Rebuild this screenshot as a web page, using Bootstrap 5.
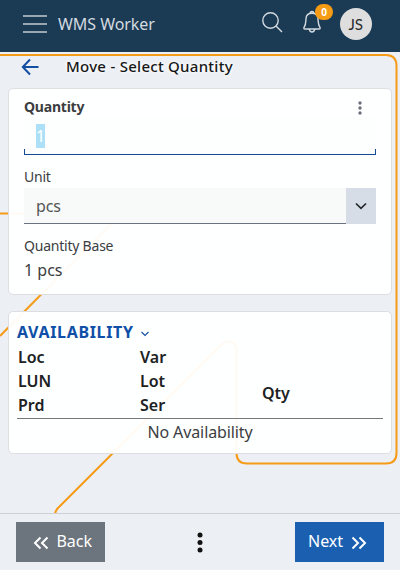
<!DOCTYPE html>
<html lang="en">
<head>
<meta charset="utf-8">
<meta name="viewport" content="width=device-width, initial-scale=1">
<title>WMS Worker</title>
<link href="https://cdn.jsdelivr.net/npm/bootstrap@5.3.0/dist/css/bootstrap.min.css" rel="stylesheet">
<style>
body{font-family:"Noto Sans","Open Sans",sans-serif;font-size:16px;line-height:24px;color:#3c3d3f;background:#eceff4;height:570px}
.topbar{height:52px;background:#1b3a54;color:#d3dae0;padding:0 28px 4px 23px}
.topbar .title{font-size:16px;margin-left:11px;letter-spacing:-.05px}
.search-icon{margin-bottom:4px}
.bell{width:20px;height:24px;margin-left:19px;margin-bottom:4px}
.count{right:-11px;top:-6px;width:18px;height:16px;background:#f59c14;color:#fff;font-size:10px;line-height:16px;font-weight:700}
.avatar{width:32px;height:32px;background:#dedede;color:#2c2c2c;font-family:Lato,sans-serif;font-size:16px;margin-left:18px}
.avatar span{transform:scaleX(.95)}
.backdrop-lines{left:0;top:0;z-index:0}
.page-main{z-index:1}
.heading{height:36px;padding:0 0 8px 21px;font-size:15px;font-weight:500;color:#171717;letter-spacing:.27px}
.heading span{margin-left:27px;line-height:22px;padding-bottom:1px;text-shadow:0 0 4px #fff,0 0 4px #fff}
.heading svg{margin-top:2px}
.panel{margin:0 8px;border:1px solid #dcdee1;border-radius:5px;background:rgba(255,255,255,.95)}
.qty-panel{height:207px;padding:7px 15px}
.avail-panel{height:143px;margin-top:16px;padding:8px}
.lbl{font-size:14px;line-height:22px}
.lbl-tight{letter-spacing:-.22px}
.lbl-gap{padding-top:11px}
.qty-field{height:37px;padding:6px 12px;border:solid #124c96;border-width:0 0 1px;background:#fdfffe}
.qty-field::before,.qty-field::after{content:"";position:absolute;bottom:0;width:1px;height:5px;background:#124c96}
.qty-field::before{left:0}.qty-field::after{right:0}
.picked{background:#ace0f6;color:#fff;display:block;width:9px;line-height:24px}
.unit-field{height:36px}
.unit-value{background:#f8faf9;border-bottom:1px solid #6b7280;padding:6px 12px;line-height:24px;color:#545557;letter-spacing:-.15px}
.unit-toggle{width:30px;background:#d6dde7}
.base-value{padding-top:1px}
.section-title{font-size:16px;font-weight:700;color:#0f4fa8;letter-spacing:.65px;line-height:24px}
.section-title svg{margin:4px 0 0 7px}
.grid-head{font-weight:600;color:#202122;line-height:24px;border-bottom:1px solid #77787a;height:75px}
.grid-head>div{width:122px;padding-left:1px}
.grid-head .qty-col{padding-top:23px}
.empty-row{letter-spacing:-.1px;padding-top:1px}
.bottombar{height:57px;border-top:1px solid #cdd0d5;background:#eceff4;padding:8px 16px;z-index:2}
.act{width:89px;height:40px;border-radius:0;font-size:16px;color:#fff}
.act-back,.act-back:hover{background:#6c757d;color:#fff;padding:0 12px 2px 16px}
.act-next,.act-next:hover{background:#1b5fb1;color:#fff;padding:0 16px 2px 12px}
.act svg{margin-top:4px}
svg{flex:none;display:block}
</style>
<script src="https://cdn.jsdelivr.net/npm/bootstrap@5.3.0/dist/js/bootstrap.bundle.min.js"></script>
</head>
<body class="position-relative d-flex flex-column overflow-hidden">
<svg class="backdrop-lines position-absolute" width="400" height="514" fill="none" stroke="#f59b18" stroke-width="2"><path d="M0 55H386Q396.500 55 396.500 66V453Q396.500 463.500 386 463.500H247Q236.500 463.500 236.500 453V350C236.500 341 227 339 221 345L58 508Q55.500 510.500 55 514M0 213.500H108C116 213.500 117 218 112 223L0 336"/></svg>
<header class="topbar d-flex align-items-center position-relative">
<svg width="24" height="20" fill="none" stroke="#98a6b2" stroke-width="2"><path d="M0 2H24M0 10H24M0 18H24"/></svg>
<span class="title">WMS Worker</span>
<svg class="ms-auto search-icon" width="21" height="21" fill="none" stroke="#d3dae0" stroke-width="1.400"><circle cx="8.500" cy="8.500" r="7.700"/><path d="M14 14L20 20"/></svg>
<div class="bell position-relative">
<svg width="20" height="24" fill="none" stroke="#d3dae0" stroke-width="1.400"><path d="M8.300 3.200V2.500Q8.300 1.500 10 1.500T11.700 2.500V3.200M2 17.500C4 15 3.700 13 4 8.500C4.200 5 6.500 3.200 10 3.200S15.800 5 16 8.500C16.300 13 16 15 18 17.500C18.500 18.500 18 19 17 19H3C2 19 1.500 18.500 2 17.500ZM7.300 19.500Q8 22 10 22T12.700 19.500"/></svg>
<span class="count position-absolute rounded-pill text-center">0</span>
</div>
<div class="avatar rounded-circle d-flex align-items-center justify-content-center"><span>JS</span></div>
</header>
<main class="page-main position-relative flex-grow-1">
<div class="heading d-flex align-items-center">
<svg width="18" height="18" fill="none" stroke="#124fa3" stroke-width="2"><path d="M9 1.500L1.800 9L9 16.500M1.500 9H17.500"/></svg>
<span>Move - Select Quantity</span>
</div>
<section class="panel qty-panel">
<div class="d-flex justify-content-between lbl lbl-tight fw-bold">
<label>Quantity</label>
<svg class="me-2" width="16" height="22" fill="#6b7078"><circle cx="8" cy="7" r="1.700"/><circle cx="8" cy="12" r="1.700"/><circle cx="8" cy="17" r="1.700"/></svg>
</div>
<div class="qty-field position-relative"><span class="picked">1</span></div>
<div class="lbl lbl-tight lbl-gap">Unit</div>
<div class="unit-field d-flex">
<div class="unit-value flex-grow-1">pcs</div>
<button class="unit-toggle border-0 p-0 d-flex align-items-center justify-content-center" aria-label="Choose unit"><svg width="12" height="8" fill="none" stroke="#26282b" stroke-width="1.700"><path d="M1 1.500L6 6.300L11 1.500"/></svg></button>
</div>
<div class="lbl lbl-tight lbl-gap">Quantity Base</div>
<div class="base-value">1 pcs</div>
</section>
<section class="panel avail-panel">
<div class="section-title d-flex align-items-center">AVAILABILITY
<svg width="8" height="6" fill="none" stroke="#0f4fa8" stroke-width="1.100"><path d="M.5 1L4 4.500L7.500 1"/></svg></div>
<div class="grid-head d-flex align-items-center">
<div>Loc<br>LUN<br>Prd</div><div>Var<br>Lot<br>Ser</div><div class="qty-col">Qty</div>
</div>
<div class="text-center empty-row">No Availability</div>
</section>
</main>
<footer class="bottombar d-flex justify-content-between position-relative">
<button class="btn act act-back d-flex align-items-center justify-content-between"><svg width="16" height="14" fill="none" stroke="#fff" stroke-width="2"><path d="M7.500 1.500L2 7L7.500 12.500M14.500 1.500L9 7L14.500 12.500"/></svg>Back</button>
<svg class="align-self-center" width="8" height="22" fill="#111"><circle cx="4" cy="4" r="2.500"/><circle cx="4" cy="11.500" r="2.500"/><circle cx="4" cy="19" r="2.500"/></svg>
<button class="btn act act-next d-flex align-items-center justify-content-between">Next<svg width="16" height="14" fill="none" stroke="#fff" stroke-width="2"><path d="M1.500 1.500L7 7L1.500 12.500M8.500 1.500L14 7L8.500 12.500"/></svg></button>
</footer>
</body>
</html>
